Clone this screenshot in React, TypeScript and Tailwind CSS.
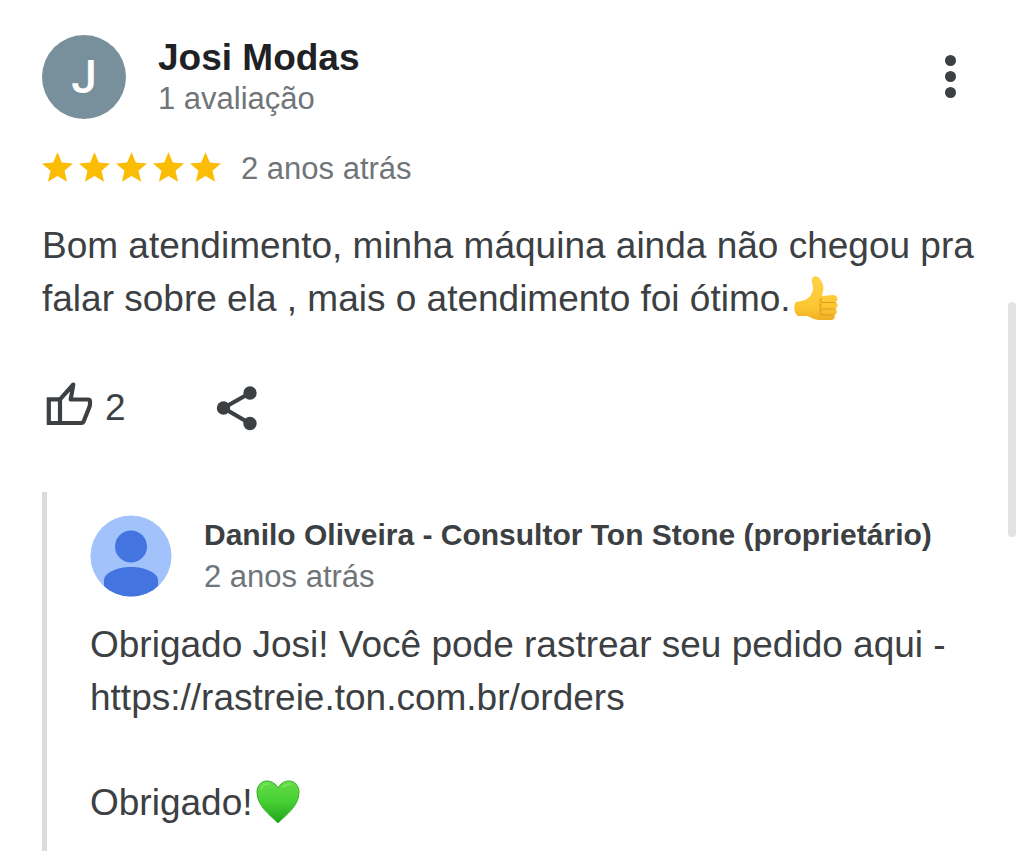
const STARS = [1, 2, 3, 4, 5];

function Star() {
  return (
    <svg viewBox="2 2 20 19" className="h-[30px] w-[31px]" fill="#fbbc04" aria-hidden="true">
      <path d="M12 17.27 18.18 21l-1.64-7.03L22 9.24l-7.19-.61L12 2 9.19 8.63 2 9.24l5.46 4.73L5.82 21z" />
    </svg>
  );
}

function ThumbIcon() {
  return (
    <svg
      viewBox="0 0 48 48"
      className="mb-1 size-12"
      fill="none"
      stroke="#3c4043"
      strokeWidth="4.2"
      aria-hidden="true"
    >
      <path d="M15 19.3H3.8V43H15z" />
      <path
        d="M15 43h21.500c1 0 1.600-.4 2-1.300l6-15c.4-1 .5-2 .5-3v-2.200c0-1.300-.7-2-2-2H25.700L28.300 4.500 15 19.300"
        strokeLinejoin="round"
      />
    </svg>
  );
}

function ShareIcon() {
  return (
    <svg viewBox="0 0 42 46" className="h-[46px] w-[42px]" fill="#3c4043" aria-hidden="true">
      <path d="M34 8 7.5 23 34 38.5" fill="none" stroke="#3c4043" strokeWidth="4.2" />
      <circle cx="34" cy="8" r="6.7" />
      <circle cx="7.5" cy="23" r="6.7" />
      <circle cx="34" cy="38.5" r="6.7" />
    </svg>
  );
}

function OwnerAvatar() {
  return (
    <svg viewBox="0 0 82 82" className="size-[82px] shrink-0" role="img" aria-label="Danilo Oliveira">
      <clipPath id="owner-clip">
        <circle cx="41" cy="41" r="40.5" />
      </clipPath>
      <circle cx="41" cy="41" r="40.5" fill="#a1c2fa" />
      <g clipPath="url(#owner-clip)" fill="#4374e0">
        <circle cx="41" cy="31.5" r="16" />
        <path d="M14 82V65c0-7 13-13 27-13s27 6 27 13v17z" />
      </g>
    </svg>
  );
}

function ThumbEmoji() {
  return (
    <svg viewBox="0 0 46 48" className="mb-1 ml-[3px] inline-block h-12 w-[46px] align-middle" role="img" aria-label="👍">
      <defs>
        <linearGradient id="skin" x1="0" y1="0" x2="0" y2="1">
          <stop offset="0" stopColor="#ffd24a" />
          <stop offset="0.7" stopColor="#fdc731" />
          <stop offset="1" stopColor="#f0ae25" />
        </linearGradient>
      </defs>
      <path
        d="M2 27c4-1 9-1 12-4 3-2 5-6 5-10 0-3-2-6-1-9 1-4 6-3 8 0 3 4 4 8 3 12l-1 5 11-1c5 0 6 6 2 7 4 1 3 6 0 7 3 1 2 6-1 6 2 3 0 5-4 5H25c-5 0-8-3-12-4H4c-4-3-5-10-2-14z"
        fill="url(#skin)"
      />
      <path
        d="M41 27.5H30c-3 0-4-2-3-4M41 34H29c-3 0-4-3-2-5M40 40H29c-3 0-4-3-2-5"
        fill="none"
        stroke="#de9a22"
        strokeWidth="1.2"
        strokeLinecap="round"
      />
      <path d="M27 23c-3 3-1 6-1 9s-1 7 2 10" fill="none" stroke="#eeb02a" strokeWidth="1" />
    </svg>
  );
}

function HeartEmoji() {
  return (
    <svg viewBox="0 0 46 46" className="mb-[6px] ml-[2px] inline-block size-[46px] align-middle" role="img" aria-label="💚">
      <defs>
        <linearGradient id="heart" x1="0" y1="0" x2="0" y2="1">
          <stop offset="0" stopColor="#65dc48" />
          <stop offset="0.5" stopColor="#45cf32" />
          <stop offset="1" stopColor="#22a31d" />
        </linearGradient>
      </defs>
      <path
        d="M23 44C15 36 2 27 2 13 2 7 6 2 12 2c5 0 9 3 11 7 2-4 6-7 11-7 6 0 10 5 10 11 0 14-13 23-21 31z"
        fill="url(#heart)"
        stroke="#35b129"
        strokeWidth="1"
      />
      <path d="M6 10c1-3 4-5 7-5M28 8c2-2 4-3 7-3" fill="none" stroke="#7fe464" strokeWidth="1.5" strokeLinecap="round" />
    </svg>
  );
}

function OwnerReply() {
  return (
    <section className="mt-[60px] border-l-[5px] border-[#dadce0] pb-5 pl-[43px]">
      <div className="flex items-center gap-8 pt-[22px]">
        <OwnerAvatar />
        <div>
          <h3 className="text-[30px] leading-[42px] font-bold">
            Danilo Oliveira - Consultor Ton Stone (proprietário)
          </h3>
          <p className="text-[31px] leading-[42px] text-[#70757a]">2 anos atrás</p>
        </div>
      </div>
      <p className="mt-5 text-[37px] leading-[53px]">
        Obrigado Josi! Você pode rastrear seu pedido aqui -
        <br />
        https://rastreie.ton.com.br/orders
      </p>
      <p className="mt-[52px] text-[37px] leading-[53px]">
        Obrigado!
        <HeartEmoji />
      </p>
    </section>
  );
}

export default function App() {
  return (
    <main className="relative bg-white pt-[35px] pr-8 pl-[42px] font-['Liberation_Sans',Arial,sans-serif] text-[#3c4043]">
      <article>
        <header className="flex items-center">
          <div className="flex size-[84px] shrink-0 items-center justify-center rounded-full bg-[#78909c] font-[Roboto,sans-serif] text-[46px] font-medium text-white">
            J
          </div>
          <div className="ml-8 grow pt-[2px]">
            <h2 className="text-[37px] leading-[41px] font-bold text-[#202124]">Josi Modas</h2>
            <p className="text-[31px] leading-[41px] text-[#70757a]">1 avaliação</p>
          </div>
          <button type="button" aria-label="Mais opções" className="mr-9 mb-[2px] flex flex-col gap-[5px]">
            <span className="size-[11px] rounded-full bg-[#3c4043]" />
            <span className="size-[11px] rounded-full bg-[#3c4043]" />
            <span className="size-[11px] rounded-full bg-[#3c4043]" />
          </button>
        </header>

        <div className="mt-[29px] flex items-center">
          <div className="mb-1 flex gap-[6px]" role="img" aria-label="5 estrelas">
            {STARS.map((n) => (
              <Star key={n} />
            ))}
          </div>
          <p className="ml-5 text-[31px] leading-[42px] text-[#70757a]">2 anos atrás</p>
        </div>

        <p className="mt-[29px] text-[37px] leading-[53px]">
          Bom atendimento, minha máquina ainda não chegou pra falar sobre ela , mais o atendimento foi ótimo.
          <ThumbEmoji />
        </p>

        {/* Like + Share */}
        <div className="mt-[53px] flex items-center pl-[3px]">
          <button type="button" className="flex items-center gap-3 text-[37px] leading-[44px]">
            <ThumbIcon />
            <span className="pt-1">2</span>
          </button>
          <button type="button" aria-label="Compartilhar" className="mt-1 ml-[90px]">
            <ShareIcon />
          </button>
        </div>

        <OwnerReply />
      </article>

      {/* Scroll indicator */}
      <div className="absolute top-[302px] right-2 h-[235px] w-2 rounded-full bg-[#e3e3e3]" />
    </main>
  );
}
